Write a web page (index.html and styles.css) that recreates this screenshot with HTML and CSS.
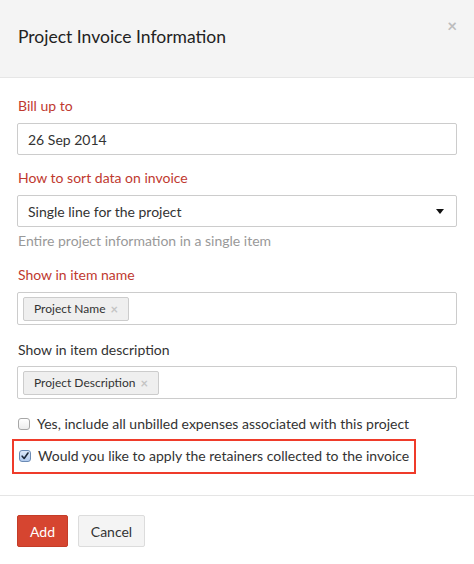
FILE: index.html
```html
<!DOCTYPE html>
<html>
<head>
<meta charset="utf-8">
<link rel="stylesheet" href="styles.css">
</head>
<body>
<div class="modal">
  <div class="modal-header">
    <h1 class="modal-title">Project Invoice Information</h1>
    <span class="close">&times;</span>
  </div>
  <div class="modal-body">
    <div class="group g1">
      <label class="label required">Bill up to</label>
      <div class="input">26 Sep 2014</div>
    </div>
    <div class="group g2">
      <label class="label required">How to sort data on invoice</label>
      <div class="input select">
        <span>Single line for the project</span>
        <span class="caret"></span>
      </div>
      <div class="help">Entire project information in a single item</div>
    </div>
    <div class="group g3">
      <label class="label required">Show in item name</label>
      <div class="tagbox"><span class="tag">Project Name <span class="tag-x">&times;</span></span></div>
    </div>
    <div class="group g4">
      <label class="label">Show in item description</label>
      <div class="tagbox"><span class="tag">Project Description <span class="tag-x">&times;</span></span></div>
    </div>
    <div class="check-row">
      <span class="cb"></span>
      <span>Yes, include all unbilled expenses associated with this project</span>
    </div>
    <div class="highlight">
      <div class="check-row">
        <span class="cb checked"><svg viewBox="0 0 12 12" width="12" height="12"><path d="M2.6 6.2 L5 9 L9.6 2.4" fill="none" stroke="#1d2a3a" stroke-width="1.9" stroke-linecap="round" stroke-linejoin="round"/></svg></span>
        <span>Would you like to apply the retainers collected to the invoice</span>
      </div>
    </div>
  </div>
  <div class="modal-footer">
    <button class="btn btn-primary">Add</button>
    <button class="btn btn-default">Cancel</button>
  </div>
</div>
</body>
</html>
```

FILE: styles.css
```css
html, body {
  margin: 0;
  padding: 0;
  background: #fff;
}
body {
  font-family: "Lato", "Liberation Sans", sans-serif;
  font-size: 14px;
  color: #333;
  width: 474px;
  height: 564px;
  overflow: hidden;
}
.modal-header {
  position: relative;
  height: 78px;
  box-sizing: border-box;
  padding: 0 0 4px 18px;
  background: #f4f4f4;
  border-bottom: 1px solid #e6e6e6;
  display: flex;
  align-items: center;
}
.modal-title {
  margin: 0;
  font-size: 17.5px;
  font-weight: 400;
  color: #222;
}
.close {
  position: absolute;
  right: 17px;
  top: 16px;
  font-size: 17px;
  font-weight: 700;
  color: #bdbdbd;
  line-height: 20px;
}
.modal-body {
  padding: 18px 17px 0 17px;
}
.group {
  display: flex;
  flex-direction: column;
}
.label {
  line-height: 20px;
  font-size: 14px;
  margin-bottom: 7px;
  padding-left: 1px;
}
.required {
  color: #c0392f;
}
.g1 { margin-bottom: 13px; }
.g2 { margin-bottom: 14px; }
.g3 { margin-bottom: 15px; }
.g4 { margin-bottom: 15px; }
.g4 .label { margin-bottom: 6px; }
.input {
  height: 32px;
  box-sizing: border-box;
  border: 1px solid #ccc;
  border-radius: 2px;
  padding: 0 10px;
  display: flex;
  align-items: center;
  color: #333;
}
.select {
  justify-content: space-between;
  padding-right: 12px;
}
.caret {
  width: 0;
  height: 0;
  border-left: 4px solid transparent;
  border-right: 4px solid transparent;
  border-top: 5px solid #111;
}
.help {
  margin-top: 4px;
  line-height: 20px;
  color: #999;
  padding-left: 1px;
}
.tagbox {
  height: 33px;
  box-sizing: border-box;
  border: 1px solid #ccc;
  border-radius: 2px;
  padding: 4px 5px;
  display: flex;
  align-items: center;
}
.tag {
  height: 24px;
  box-sizing: border-box;
  background: #efefef;
  border: 1px solid #ccc;
  border-radius: 2px;
  padding: 0 10px;
  font-size: 12px;
  color: #333;
  display: inline-flex;
  align-items: center;
  gap: 5px;
}
.tag-x {
  color: #c4c4c4;
  font-weight: 700;
  font-size: 13px;
}
.check-row {
  display: flex;
  align-items: center;
  gap: 7px;
  line-height: 20px;
  padding-left: 1px;
}
.cb {
  width: 12px;
  height: 12px;
  box-sizing: border-box;
  border: 1px solid #a7a7a7;
  border-radius: 3px;
  background: linear-gradient(#ffffff, #ececec);
  display: inline-flex;
  align-items: center;
  justify-content: center;
  flex-shrink: 0;
}
.cb.checked {
  border-color: #6b8bb5;
  background: linear-gradient(#dde9f8, #b2cbee);
}
.highlight {
  margin-top: 5px;
  margin-left: -5px;
  border: 2px solid #ef3b2a;
  width: 396px;
  padding: 5px 0 6px 4px;
}
.modal-footer {
  margin-top: 21px;
  border-top: 1px solid #e5e5e5;
  padding: 19px 17px;
  display: flex;
  gap: 10px;
}
.btn {
  height: 32px;
  font-family: inherit;
  font-size: 14px;
  border-radius: 2px;
  cursor: pointer;
  padding: 0;
}
.btn-primary {
  background: #d64530;
  border: 1px solid #c43c28;
  color: #fff;
  width: 51px;
}
.btn-default {
  background: #f4f4f4;
  border: 1px solid #dcdcdc;
  color: #333;
  width: 67px;
}
```
